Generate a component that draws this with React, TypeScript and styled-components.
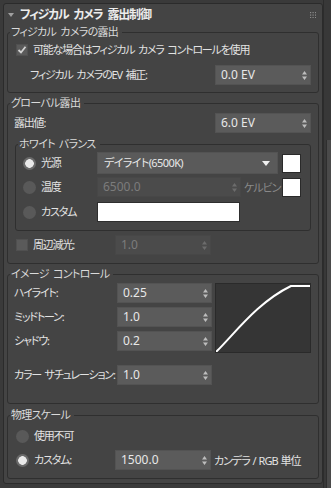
import React from 'react';
import styled, { createGlobalStyle } from 'styled-components';

const FONT = '"Noto Sans", "Noto Sans CJK JP", sans-serif';

const GlobalStyle = createGlobalStyle`
  html, body {
    margin: 0;
    padding: 0;
    background: #3a3a3a;
  }
  body {
    font-family: ${FONT};
    font-size: 11px;
    color: #e2e2e2;
    font-feature-settings: "palt";
  }
`;

const Page = styled.div`
  display: flex;
  width: 331px;
  height: 488px;
  overflow: hidden;
`;

const Rollout = styled.div`
  box-sizing: border-box;
  width: 320px;
  margin: 3px 0 0 3px;
  align-self: flex-start;
  background: #444444;
  border: 1px solid #2b2b2b;
  border-radius: 3px;
  padding: 0 3px 4px;
  display: flex;
  flex-direction: column;
`;

const Header = styled.div`
  display: flex;
  align-items: center;
  height: 22px;
  margin: 0 -3px;
  padding: 0 6px 0 4px;
`;

const Caret = styled.span`
  width: 0;
  height: 0;
  border-left: 3px solid transparent;
  border-right: 3px solid transparent;
  border-top: 4px solid #a0a0a0;
  margin-right: 6px;
`;

const Title = styled.span`
  flex: 1;
  font-size: 12px;
  font-weight: 700;
  letter-spacing: -1.2px;
  word-spacing: 3px;
  color: #ececec;
  line-height: 14px;
`;

const Group = styled.fieldset<{ $mt?: number; $pt: number; $pb: number; $mx?: number }>`
  margin: ${p => p.$mt ?? 0}px ${p => p.$mx ?? 0}px 0;
  min-width: 0;
  border: 1px solid #2f2f2f;
  border-radius: 3px;
  padding: ${p => p.$pt}px 0 ${p => p.$pb}px;
  display: flex;
  flex-direction: column;
`;

const Legend = styled.legend`
  margin-left: 2px;
  padding: 0 4px 0 1px;
  line-height: 12px;
  letter-spacing: -0.7px;
  word-spacing: 2px;
  color: #dadada;
`;

const Row = styled.div<{ $h?: number; $mt?: number; $pl: number; $pr?: number }>`
  display: flex;
  align-items: center;
  height: ${p => p.$h ?? 20}px;
  margin-top: ${p => p.$mt ?? 0}px;
  padding: 0 ${p => p.$pr ?? 0}px 0 ${p => p.$pl}px;
`;

const Label = styled.span<{ $w?: number; $dim?: boolean }>`
  display: flex;
  align-items: center;
  gap: 5px;
  width: ${p => (p.$w ? `${p.$w}px` : 'auto')};
  flex: ${p => (p.$w ? 'none' : '1')};
  white-space: nowrap;
  line-height: 14px;
  letter-spacing: -1.2px;
  word-spacing: 2px;
  color: ${p => (p.$dim ? '#8a8a8a' : '#e2e2e2')};
`;

const Box = styled.span`
  width: 12px;
  height: 12px;
  flex: none;
  background: #5a5a5a;
  border: 1px solid #505050;
  box-sizing: border-box;
  display: flex;
  align-items: center;
  justify-content: center;
`;

const Radio = styled.span<{ $on?: boolean }>`
  width: 13px;
  height: 13px;
  flex: none;
  border-radius: 50%;
  background: ${p =>
    p.$on
      ? 'radial-gradient(circle, #e9e9e9 0 4px, #6a6a6a 4.6px)'
      : '#595959'};
`;

const SpinBox = styled.div<{ $w: number; $off?: boolean }>`
  box-sizing: border-box;
  display: flex;
  align-items: center;
  flex: none;
  width: ${p => p.$w}px;
  height: 20px;
  padding: 0 3px 0 5px;
  background: ${p => (p.$off ? '#4b4b4b' : '#5b5b5b')};
  border: 1px solid ${p => (p.$off ? '#474747' : '#535353')};
  color: ${p => (p.$off ? '#7c7c7c' : '#e8e8e8')};
  font-size: 12px;
  line-height: 14px;
`;

const SpinText = styled.span`
  flex: 1;
`;

const Arrows = ({ off }: { off?: boolean }) => (
  <svg width="5" height="9" viewBox="0 0 5 9">
    <path d="M2.5 0 L5 3.5 L0 3.5 Z M0 5.5 L5 5.5 L2.5 9 Z" fill={off ? '#6c6c6c' : '#bdbdbd'} />
  </svg>
);

const Spinner = ({ value, w = 96, off }: { value: string; w?: number; off?: boolean }) => (
  <SpinBox $w={w} $off={off}>
    <SpinText>{value}</SpinText>
    <Arrows off={off} />
  </SpinBox>
);

const Dropdown = styled.div`
  box-sizing: border-box;
  display: flex;
  align-items: center;
  width: 181px;
  height: 22px;
  padding: 0 7px 0 6px;
  background: #5a5a5a;
  border: 1px solid #535353;
  color: #e8e8e8;
  line-height: 14px;
  letter-spacing: -0.6px;
`;

const Swatch = styled.span`
  box-sizing: border-box;
  width: 19px;
  height: 19px;
  flex: none;
  margin-left: auto;
  background: #ffffff;
  border: 1px solid #2a2a2a;
`;

const ColorField = styled.span`
  box-sizing: border-box;
  width: 143px;
  height: 20px;
  background: #ffffff;
  border: 1px solid #2e2e2e;
`;

const Unit = styled.span<{ $dim?: boolean }>`
  margin-left: 3px;
  white-space: nowrap;
  letter-spacing: -1px;
  word-spacing: 1px;
  color: ${p => (p.$dim ? '#8a8a8a' : '#e2e2e2')};
`;

const ImageTop = styled.div`
  display: flex;
  align-items: flex-start;
  padding: 0 7px 0 6px;
`;

const ImageRows = styled.div`
  display: flex;
  flex-direction: column;
  gap: 4px;
`;

const ImageRow = styled.div`
  display: flex;
  align-items: center;
  height: 20px;
`;

const Curve = styled.div`
  box-sizing: border-box;
  width: 96px;
  height: 70px;
  margin-left: 3px;
  background: #353535;
  border: 1px solid #2a2a2a;
`;

const Gutter = styled.div`
  flex: 1;
  display: flex;
  justify-content: flex-end;
  background: #383838;
  border-left: 1px solid #2c2c2c;
`;

const Thumb = styled.div`
  width: 4px;
  margin-top: 140px;
  background: #4a4a4a;
  border-left: 1px solid #2e2e2e;
`;

const Grip = () => (
  <svg width="6" height="6" viewBox="0 0 6 6">
    {[0, 2.5, 5].map(y =>
      [0, 2.5, 5].map(x => <rect key={`${x}-${y}`} x={x} y={y} width="1.2" height="1.2" fill="#8c8c8c" />)
    )}
  </svg>
);

const Check = () => (
  <svg width="10" height="10" viewBox="0 0 10 10">
    <path d="M1.5 5 L4 7.5 L8.5 1.8" stroke="#d2d2d2" strokeWidth="1.8" fill="none" />
  </svg>
);

const DownArrow = () => (
  <svg width="8" height="5" viewBox="0 0 8 5">
    <path d="M0 0 L8 0 L4 5 Z" fill="#f0f0f0" />
  </svg>
);

const App: React.FC = () => (
  <Page>
    <GlobalStyle />
    <Rollout>
      <Header>
        <Caret />
        <Title>フィジカル カメラ 露出制御</Title>
        <Grip />
      </Header>

      <Group $pt={2} $pb={7}>
        <Legend>フィジカル カメラの露出</Legend>
        <Row $pl={8}>
          <Label>
            <Box>
              <Check />
            </Box>
            可能な場合はフィジカル カメラ コントロールを使用
          </Label>
        </Row>
        <Row $mt={5} $pl={22} $pr={7}>
          <Label>フィジカル カメラのEV 補正:</Label>
          <Spinner value="0.0 EV" />
        </Row>
      </Group>

      <Group $mt={4} $pt={4} $pb={8}>
        <Legend>グローバル露出</Legend>
        <Row $pl={6} $pr={7}>
          <Label>露出値:</Label>
          <Spinner value="6.0 EV" />
        </Row>

        <Group $mt={5} $mx={7} $pt={2} $pb={8}>
          <Legend>ホワイト バランス</Legend>
          <Row $h={22} $pl={7} $pr={9}>
            <Label $w={74}>
              <Radio $on />
              光源
            </Label>
            <Dropdown>
              <SpinText>デイライト(6500K)</SpinText>
              <DownArrow />
            </Dropdown>
            <Swatch />
          </Row>
          <Row $mt={3} $pl={7} $pr={9}>
            <Label $w={74}>
              <Radio />
              温度
            </Label>
            <Spinner value="6500.0" w={144} off />
            <Unit $dim>ケルビン</Unit>
            <Swatch />
          </Row>
          <Row $mt={5} $pl={7}>
            <Label $w={74}>
              <Radio />
              カスタム
            </Label>
            <ColorField />
          </Row>
        </Group>

        <Row $mt={4} $pl={8}>
          <Label $w={99}>
            <Box />
            周辺減光:
          </Label>
          <Spinner value="1.0" w={96} off />
        </Row>
      </Group>

      <Group $mt={4} $pt={3} $pb={18}>
        <Legend>イメージ コントロール</Legend>
        <ImageTop>
          <ImageRows>
            <ImageRow>
              <Label $w={103}>ハイライト:</Label>
              <Spinner value="0.25" w={95} />
            </ImageRow>
            <ImageRow>
              <Label $w={103}>ミッドトーン:</Label>
              <Spinner value="1.0" w={95} />
            </ImageRow>
            <ImageRow>
              <Label $w={103}>シャドウ:</Label>
              <Spinner value="0.2" w={95} />
            </ImageRow>
          </ImageRows>
          <Curve>
            <svg width="94" height="68" viewBox="0 0 94 68">
              <path d="M0 68 C 20 48 42 18 75 2 L 94 2" stroke="#ffffff" strokeWidth="2" fill="none" />
            </svg>
          </Curve>
        </ImageTop>
        <Row $mt={12} $pl={6}>
          <Label $w={103}>カラー サチュレーション:</Label>
          <Spinner value="1.0" w={95} />
        </Row>
      </Group>

      <Group $mt={5} $pt={5} $pb={8}>
        <Legend>物理スケール</Legend>
        <Row $pl={8}>
          <Label>
            <Radio />
            使用不可
          </Label>
        </Row>
        <Row $mt={4} $pl={8}>
          <Label $w={99}>
            <Radio $on />
            カスタム:
          </Label>
          <Spinner value="1500.0" w={96} />
          <Unit>カンデラ / RGB 単位</Unit>
        </Row>
      </Group>
    </Rollout>
    <Gutter>
      <Thumb />
    </Gutter>
  </Page>
);

export default App;
